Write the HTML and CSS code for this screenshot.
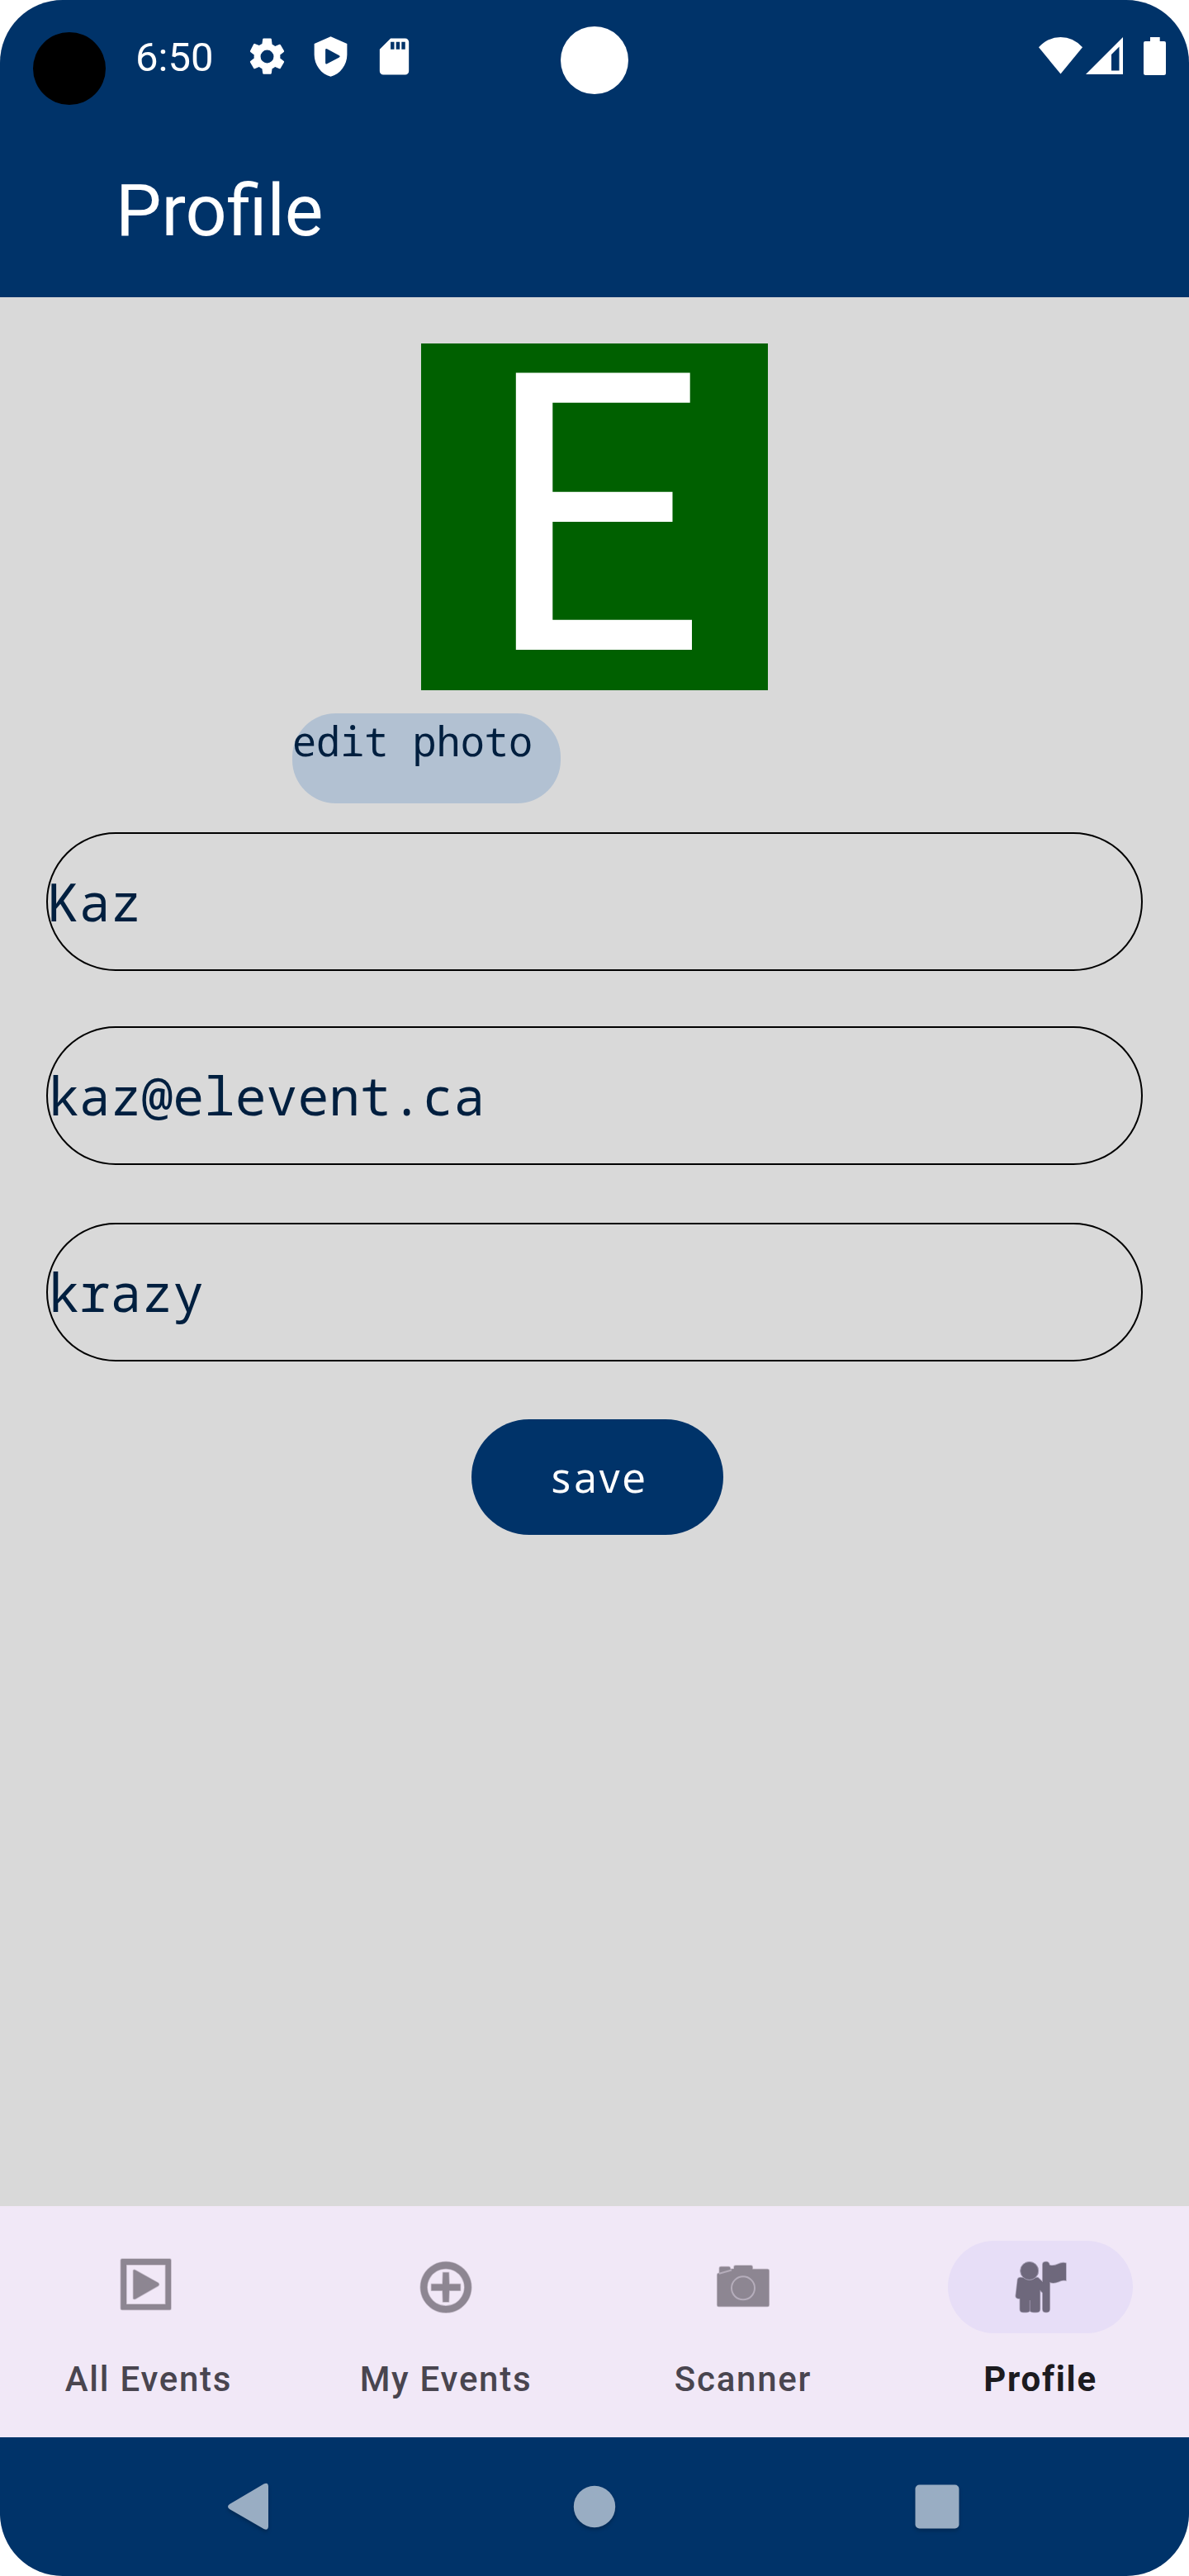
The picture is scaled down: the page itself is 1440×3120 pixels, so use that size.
FILE: index.html
```
<!DOCTYPE html>
<html lang="en">
<head>
<meta charset="utf-8">
<title>Profile</title>
<link rel="stylesheet" href="styles.css">
</head>
<body>
<div class="screen">
  <header class="top">
    <div class="status">
      <span class="lens"></span>
      <span class="clock">6:50</span>
      <div class="notices">
        <svg viewBox="0 0 24 24"><path d="M19.14 12.94c.04-.3.06-.61.06-.94 0-.32-.02-.64-.07-.94l2.03-1.58a.49.49 0 0 0 .12-.61l-1.92-3.32a.49.49 0 0 0-.59-.22l-2.39.96c-.5-.38-1.03-.7-1.62-.94L14.4 2.41A.48.48 0 0 0 13.92 2h-3.84c-.24 0-.43.17-.47.41l-.36 2.54c-.59.24-1.13.57-1.62.94l-2.39-.96a.48.48 0 0 0-.59.22L2.74 8.87c-.12.21-.08.47.12.61l2.03 1.58c-.05.3-.09.63-.09.94s.02.64.07.94l-2.03 1.58a.49.49 0 0 0-.12.61l1.92 3.32c.12.22.37.29.59.22l2.39-.96c.5.38 1.03.7 1.62.94l.36 2.54c.05.24.24.41.48.41h3.84c.24 0 .44-.17.47-.41l.36-2.54c.59-.24 1.13-.56 1.62-.94l2.39.96c.22.08.47 0 .59-.22l1.92-3.32a.48.48 0 0 0-.12-.61zM12 15.6A3.6 3.6 0 1 1 12 8.4a3.6 3.6 0 0 1 0 7.2z"/></svg>
        <svg viewBox="0 0 24 24"><path fill-rule="evenodd" d="M12 1 3 5v6c0 5.550 3.840 10.740 9 12 5.160-1.260 9-6.450 9-12V5zM9.100 8.300Q9.200 7.400 10 7.800L16.700 11.400Q17.500 11.900 16.700 12.400L10 16Q9.200 16.400 9.100 15.500z"/></svg>
        <svg viewBox="0 0 24 24"><path fill-rule="evenodd" d="M18 2h-8L4 8v12c0 1.100.9 2 2 2h12c1.100 0 2-.9 2-2V4c0-1.100-.9-2-2-2zM10 4h2v4h-2zM13 4h2v4h-2zM16 4h2v4h-2z"/></svg>
      </div>
      <span class="camera"></span>
      <div class="signals">
        <svg class="wifi" viewBox="0 0 53 45"><path d="M0 12.300Q11 0 26.500 0T53 12.300L26.500 44.500z"/></svg>
        <svg class="cell" viewBox="0 0 45 45"><path fill-rule="evenodd" d="M0 45 45 0V45zM31 21V40.500H40.500V11.500z"/></svg>
        <svg class="battery" viewBox="0 0 27 46"><path d="M8 0H19.700V5H25Q27 5 27 7V43.500Q27 46 24.500 46H2.500Q0 46 0 43.500V7Q0 5 2 5H8z"/></svg>
      </div>
    </div>
    <h1 class="title">Profile</h1>
  </header>

  <main class="content">
    <div class="photo">E</div>
    <button class="edit">edit photo</button>
    <div class="field name">Kaz</div>
    <div class="field">kaz@elevent.ca</div>
    <div class="field">krazy</div>
    <button class="save">save</button>
  </main>

  <nav class="tabs">
    <a class="tab"><span class="pill"><svg viewBox="0 0 84 84"><path fill-rule="evenodd" d="M10 8H67.500Q69 8 69 9.500V68Q69 69.500 67.500 69.500H10Q8.300 69.500 8.300 68V9.500Q8.300 8 10 8zM15 15V63H62.500V15z"/><path d="M23.500 22Q24.500 20.500 26.500 22L53.500 37Q55.500 38.800 53.500 40.600L26.500 56Q24.500 57 23.500 56z"/></svg></span><span>All Events</span></a>
    <a class="tab"><span class="pill"><svg viewBox="0 0 84 84"><path fill-rule="evenodd" d="M42 11.500a30.800 30.800 0 1 0 .1 0zM42 19.700a22.600 22.600 0 1 1-.1 0z"/><path d="M38.500 24.500H45.500L46 38.500H59.500V46.300H46L45.500 60H38.500L38 46.300H24.500V38.500H38z"/></svg></span><span>My Events</span></a>
    <a class="tab"><span class="pill"><svg viewBox="0 0 84 84"><path d="M13.300 19Q13.300 17.500 15 17.500H24.500Q26.500 17.500 26.500 20.500L31 20V17.500Q31 16 33 16H51.500Q53.300 16 53.300 18V20.500H71.500Q73.300 20.500 73.300 22V64Q73.300 65.500 71.500 65.500H12.500Q10.700 65.500 10.700 64V27Q10.700 25.500 13.300 25.300z"/><path class="ring" d="M13 25.800 28 21.500"/><circle class="ring" cx="42" cy="43.300" r="14"/></svg></span><span>Scanner</span></a>
    <a class="tab active"><span class="pill"><svg viewBox="0 0 84 84"><path d="M18 30.500 22 31Q28.700 36 36 31L39 30.500 44.800 36V14.500Q44.800 11.500 49 11.500 52.500 11.500 53 15.500 58 17 63 14.500 69 11.500 73 13.300V34Q68 33 64 35.500 58 38 53.300 36V69Q53.300 72.500 49 72.500 44.800 72.500 44.800 69V49L41.500 45.500V69Q41.500 72.500 37 72.500H34Q30 72.500 29.300 70 28.500 72.500 25 72.500H21.500Q17.300 72.500 17.300 69V56Q11.500 56 12.300 52L14.500 33Q15 30.500 18 30.500z"/><circle class="head" cx="28.700" cy="22.400" r="11"/><path class="gap" d="M29.300 58V72"/></svg></span><span>Profile</span></a>
  </nav>

  <footer class="system">
    <svg viewBox="0 0 84 84"><path d="M16 39 57.500 14.500Q62.500 12 63 17V66Q62.500 71.500 57.500 69L16 45Q12 42 16 39z"/></svg>
    <svg viewBox="0 0 84 84"><circle cx="42" cy="42" r="25.200"/></svg>
    <svg viewBox="0 0 84 84"><rect x="15.500" y="15.500" width="53" height="53" rx="5"/></svg>
  </footer>
</div>
</body>
</html>
```
FILE: styles.css
```
* { box-sizing: border-box; }
body { margin: 0; background: #fff; font-family: Roboto, sans-serif; }
svg { display: block; fill: currentColor; flex: none; }
button { border: 0; margin: 0; padding: 0; font: inherit; }

.screen {
  width: 1440px;
  height: 3120px;
  display: flex;
  flex-direction: column;
  overflow: hidden;
  border-radius: 76px;
  background: #d9d9d9;
}

.top { height: 360px; background: #003369; color: #fff; }
.status { height: 146px; display: flex; align-items: flex-start; padding-left: 40px; }
.lens { width: 88px; height: 88px; margin-top: 39px; border-radius: 50%; background: #000; }
.clock { width: 95px; margin: 41px 0 0 36px; font-size: 49px; line-height: 58px; }
.notices { display: flex; gap: 24px; margin: 42px 0 0 38px; }
.notices svg { width: 53px; height: 53px; }
.camera { width: 82px; height: 82px; margin: 32px 0 0 175px; border-radius: 50%; background: #fff; }
.signals { display: flex; margin: 45px 0 0 497px; }
.wifi { width: 53px; height: 45px; }
.cell { width: 45px; height: 45px; margin-left: 4px; }
.battery { width: 27px; height: 46px; margin-left: 25px; }
.title { margin: 0; padding: 57px 0 0 140px; font-size: 88px; line-height: 104px; font-weight: 400; }

.content {
  flex: 1;
  display: flex;
  flex-direction: column;
  align-items: center;
  padding: 56px 56px 0;
  color: #001f3f;
  font-family: "Droid Sans Mono", "Noto Sans Mono", "DejaVu Sans Mono", monospace;
}
.photo {
  width: 420px;
  height: 420px;
  background: #006000;
  color: #fff;
  font: 472px/420px Roboto, sans-serif;
  text-align: center;
}
.edit {
  width: 325px;
  height: 109px;
  margin: 28px 407px 35px 0;
  padding-bottom: 43px;
  border-radius: 52.5px;
  background: #b2c1d2;
  color: inherit;
  font-size: 48.500px;
  text-align: left;
  white-space: nowrap;
}
.field {
  width: 1328px;
  height: 168px;
  margin-bottom: 70px;
  border: 2px solid #000;
  border-radius: 84px;
  font-size: 63px;
  line-height: 163px;
}
.name { margin-bottom: 67px; }
.save {
  width: 305px;
  height: 140px;
  margin-left: 7px;
  border-radius: 70px;
  background: #003369;
  color: #fff;
  font-size: 49px;
}

.tabs { height: 280px; display: flex; background: #f1e8f7; }
.tab {
  flex: 1;
  display: flex;
  flex-direction: column;
  align-items: center;
  padding-top: 42px;
  color: #49454f;
  font-size: 42px;
  line-height: 50px;
  font-weight: 500;
  letter-spacing: 1.750px;
}
.pill {
  width: 224px;
  height: 112px;
  display: flex;
  align-items: center;
  justify-content: center;
  margin-bottom: 31px;
  border-radius: 56px;
  color: #8d8692;
}
.pill svg { width: 84px; height: 84px; stroke: currentColor; stroke-opacity: .45; stroke-width: 1.500px; }
.pill .ring { fill: none; stroke: #b5adbb; stroke-opacity: 1; stroke-width: 2px; }
.pill .head { stroke: #a49db4; stroke-opacity: 1; stroke-width: 1px; }
.pill .gap { stroke: #9a93ab; stroke-opacity: 1; stroke-width: 1px; }
.active { color: #1c1b1f; font-weight: 700; }
.active .pill { background: #e7def7; color: #6e687c; }

.system {
  height: 168px;
  display: flex;
  align-items: center;
  padding: 0 263px 0 262px;
  justify-content: space-between;
  background: #003369;
  color: #99adc3;
}
.system svg { width: 84px; height: 84px; filter: drop-shadow(0 3px 2px rgba(0, 0, 0, .2)); }
```
